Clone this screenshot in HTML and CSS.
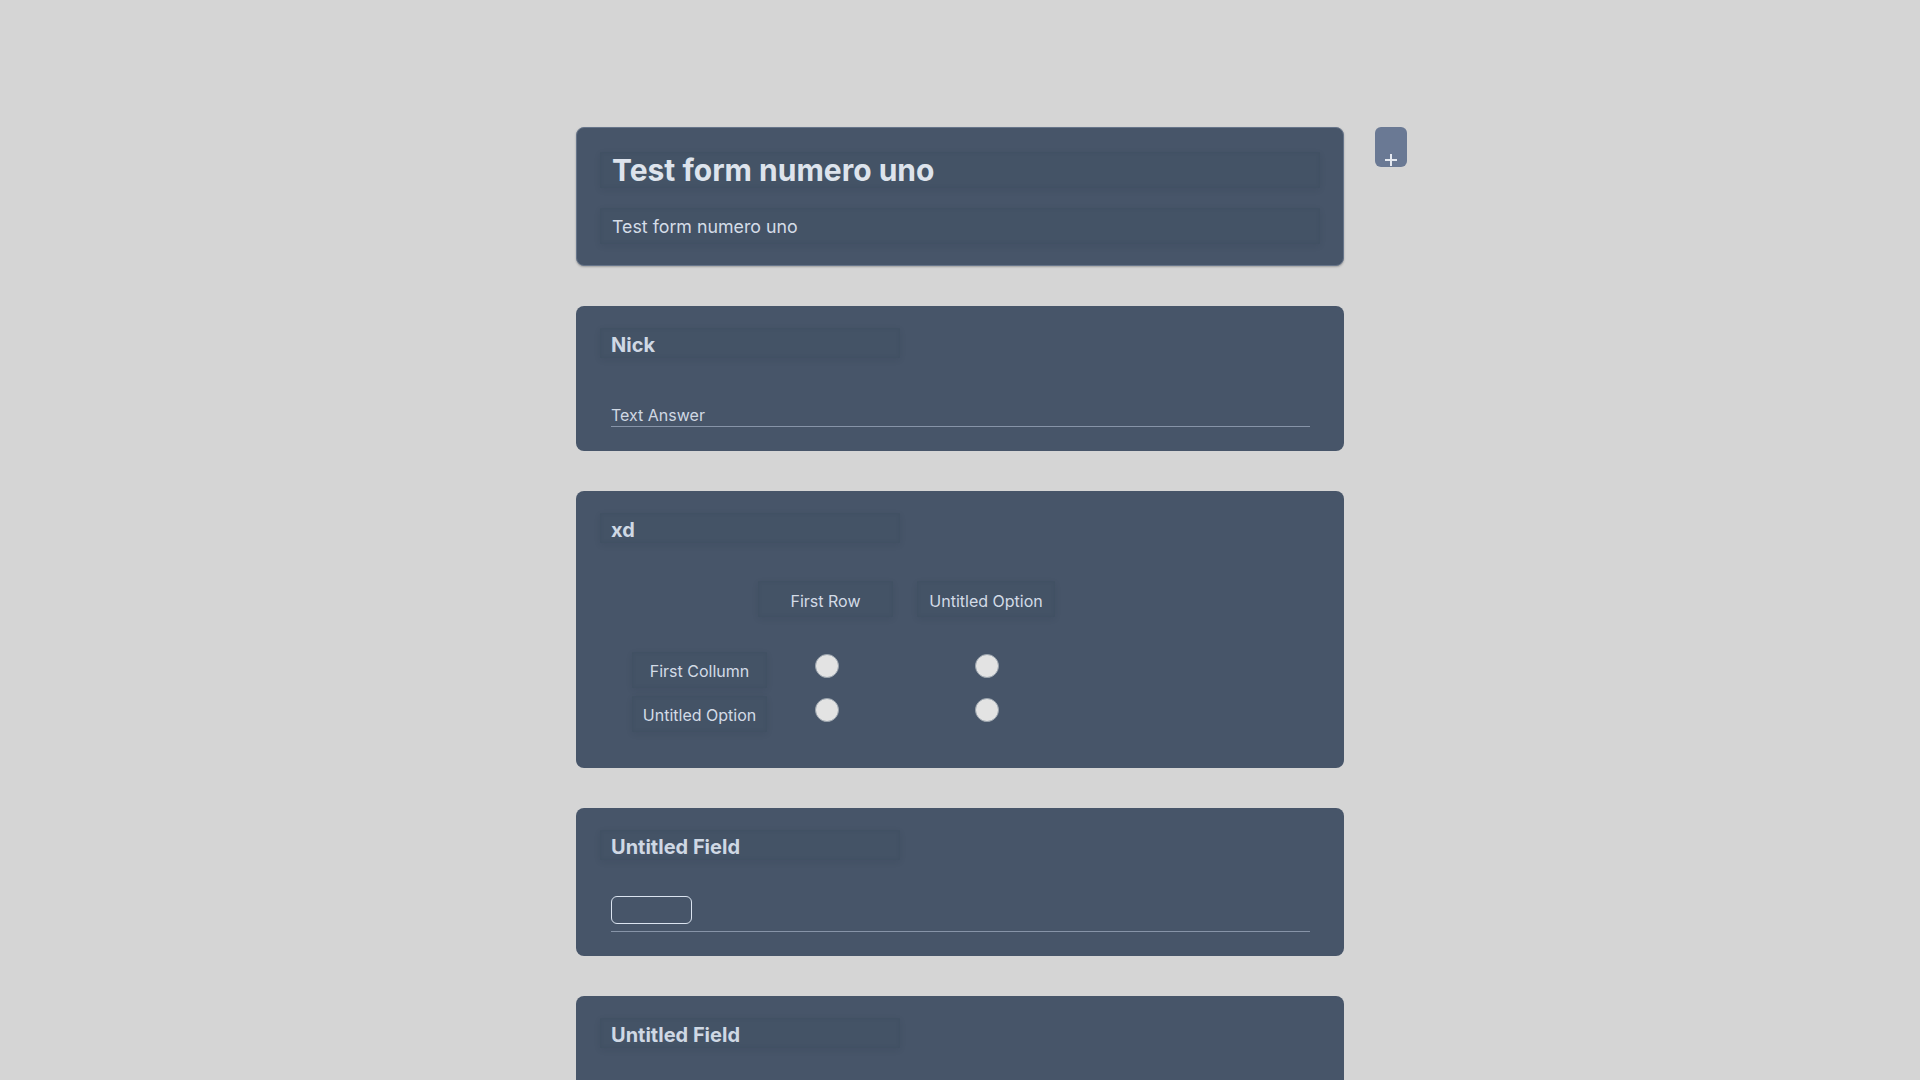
FILE: index.html
```html
<!DOCTYPE html>
<html lang="en">
<head>
<meta charset="utf-8">
<title>Test form numero uno</title>
<link rel="stylesheet" href="styles.css">
</head>
<body>
<div class="page">
  <div class="side"></div>
  <main class="column">
    <section class="card card-head">
      <div class="box box-title">Test form numero uno</div>
      <div class="box box-desc">Test form numero uno</div>
    </section>

    <section class="card">
      <div class="box box-q">Nick</div>
      <div class="answer">
        <div class="answer-line"><span class="placeholder">Text Answer</span></div>
      </div>
    </section>

    <section class="card card-grid">
      <div class="box box-q">xd</div>
      <div class="matrix">
        <div class="mrow mhead">
          <div class="mspacer"></div>
          <div class="box mcell mh1">First Row</div>
          <div class="box mcell mh2">Untitled Option</div>
        </div>
        <div class="mrow">
          <div class="box mcell mlabel">First Collumn</div>
          <div class="mradio mr1"><span class="radio"></span></div>
          <div class="mradio mr2"><span class="radio"></span></div>
        </div>
        <div class="mrow">
          <div class="box mcell mlabel">Untitled Option</div>
          <div class="mradio mr1"><span class="radio"></span></div>
          <div class="mradio mr2"><span class="radio"></span></div>
        </div>
      </div>
    </section>

    <section class="card">
      <div class="box box-q">Untitled Field</div>
      <div class="answer answer-small">
        <div class="answer-line line-small"><span class="small-input"></span></div>
      </div>
    </section>

    <section class="card">
      <div class="box box-q">Untitled Field</div>
      <div class="answer answer-small">
        <div class="answer-line line-small"><span class="small-input"></span></div>
      </div>
    </section>
  </main>
  <div class="side side-right">
    <button class="add-btn" type="button" aria-label="Add field">
      <svg width="14" height="14" viewBox="0 0 14 14"><path d="M7 1v12M1 7h12" stroke="#e5e9f0" stroke-width="2" fill="none"/></svg>
    </button>
  </div>
</div>
</body>
</html>
```

FILE: styles.css
```css
* { box-sizing: border-box; }

html, body {
  margin: 0;
  padding: 0;
  background: #d5d5d5;
  font-family: Inter, "Noto Sans", "Liberation Sans", sans-serif;
  color: #dbe2ec;
}

.page {
  display: grid;
  grid-template-columns: 1fr 768px 1fr;
  padding-top: 127px;
  min-height: 1080px;
}

.column {
  display: flex;
  flex-direction: column;
  gap: 40px;
}

.side-right {
  padding-left: 31px;
}

.add-btn {
  width: 32px;
  height: 40px;
  border: none;
  border-radius: 6px;
  background: #6a7994;
  padding: 0;
  display: flex;
  align-items: flex-end;
  justify-content: center;
  cursor: pointer;
}
.add-btn svg { display: block; margin-bottom: 0; }

.card {
  background: #475569;
  border-radius: 8px;
  padding: 22px 24px 24px;
}

.card-head {
  border: 1px solid #67758a;
  padding: 24px 23px 21px;
  box-shadow: 0 1px 2px rgba(0, 0, 0, 0.25);
}

.box {
  background: rgba(40, 50, 66, 0.06);
  box-shadow: 0 2px 6px rgba(30, 40, 55, 0.10), inset 0 0 4px rgba(30, 40, 55, 0.08);
  border-radius: 2px;
  padding: 0 11px;
  display: flex;
  align-items: center;
}

.box-title {
  height: 36px;
  font-size: 30px;
  font-weight: 700;
  color: #dde3ec;
  letter-spacing: 0;
  padding-left: 12px;
}

.box-desc {
  height: 36px;
  margin-top: 20px;
  font-size: 17.8px;
  font-weight: 400;
  color: #d5dde8;
  padding-left: 12px;
  padding-top: 1px;
}

.box-q {
  width: 300px;
  height: 30px;
  font-size: 20px;
  font-weight: 700;
  color: #cfd8e4;
  padding-top: 3px;
}

.answer {
  padding: 0 10px 0 11px;
  margin-top: 45px;
}

.answer-line {
  border-bottom: 1px solid #8794a8;
  height: 24px;
  display: flex;
  align-items: center;
}

.placeholder {
  font-size: 16px;
  color: #d0d8e3;
}

.answer-small { margin-top: 36px; }

.line-small {
  height: 36px;
  align-items: flex-start;
}

.small-input {
  display: block;
  width: 81px;
  height: 28px;
  border: 1px solid #dbe4f0;
  border-radius: 6px;
}

/* matrix */
.card-grid { padding-bottom: 32px; }

.matrix {
  display: flex;
  flex-direction: column;
  padding-left: 32px;
}

.mrow {
  display: flex;
  align-items: center;
  height: 44px;
}

.mhead {
  height: 36px;
  margin-top: 38px;
  margin-bottom: 31px;
}

.mspacer { width: 126px; flex: none; }

.mcell {
  justify-content: center;
  font-size: 16px;
  color: #d3dbe6;
  height: 36px;
  flex: none;
  padding: 0 8px;
}

.mh1 { width: 135px; padding-top: 4px; }
.mh2 { width: 138px; margin-left: 24px; padding-top: 4px; }

.mlabel { width: 135px; padding-top: 2px; }

.mradio {
  flex: none;
  display: flex;
  justify-content: center;
  align-items: center;
  height: 44px;
  padding-bottom: 8px;
}
.mr1 { width: 120px; }
.mr2 { width: 200px; }

.radio {
  display: block;
  width: 24px;
  height: 24px;
  border-radius: 50%;
  background: #e3e3e3;
  border: 1px solid #9aa3ad;
}
```
